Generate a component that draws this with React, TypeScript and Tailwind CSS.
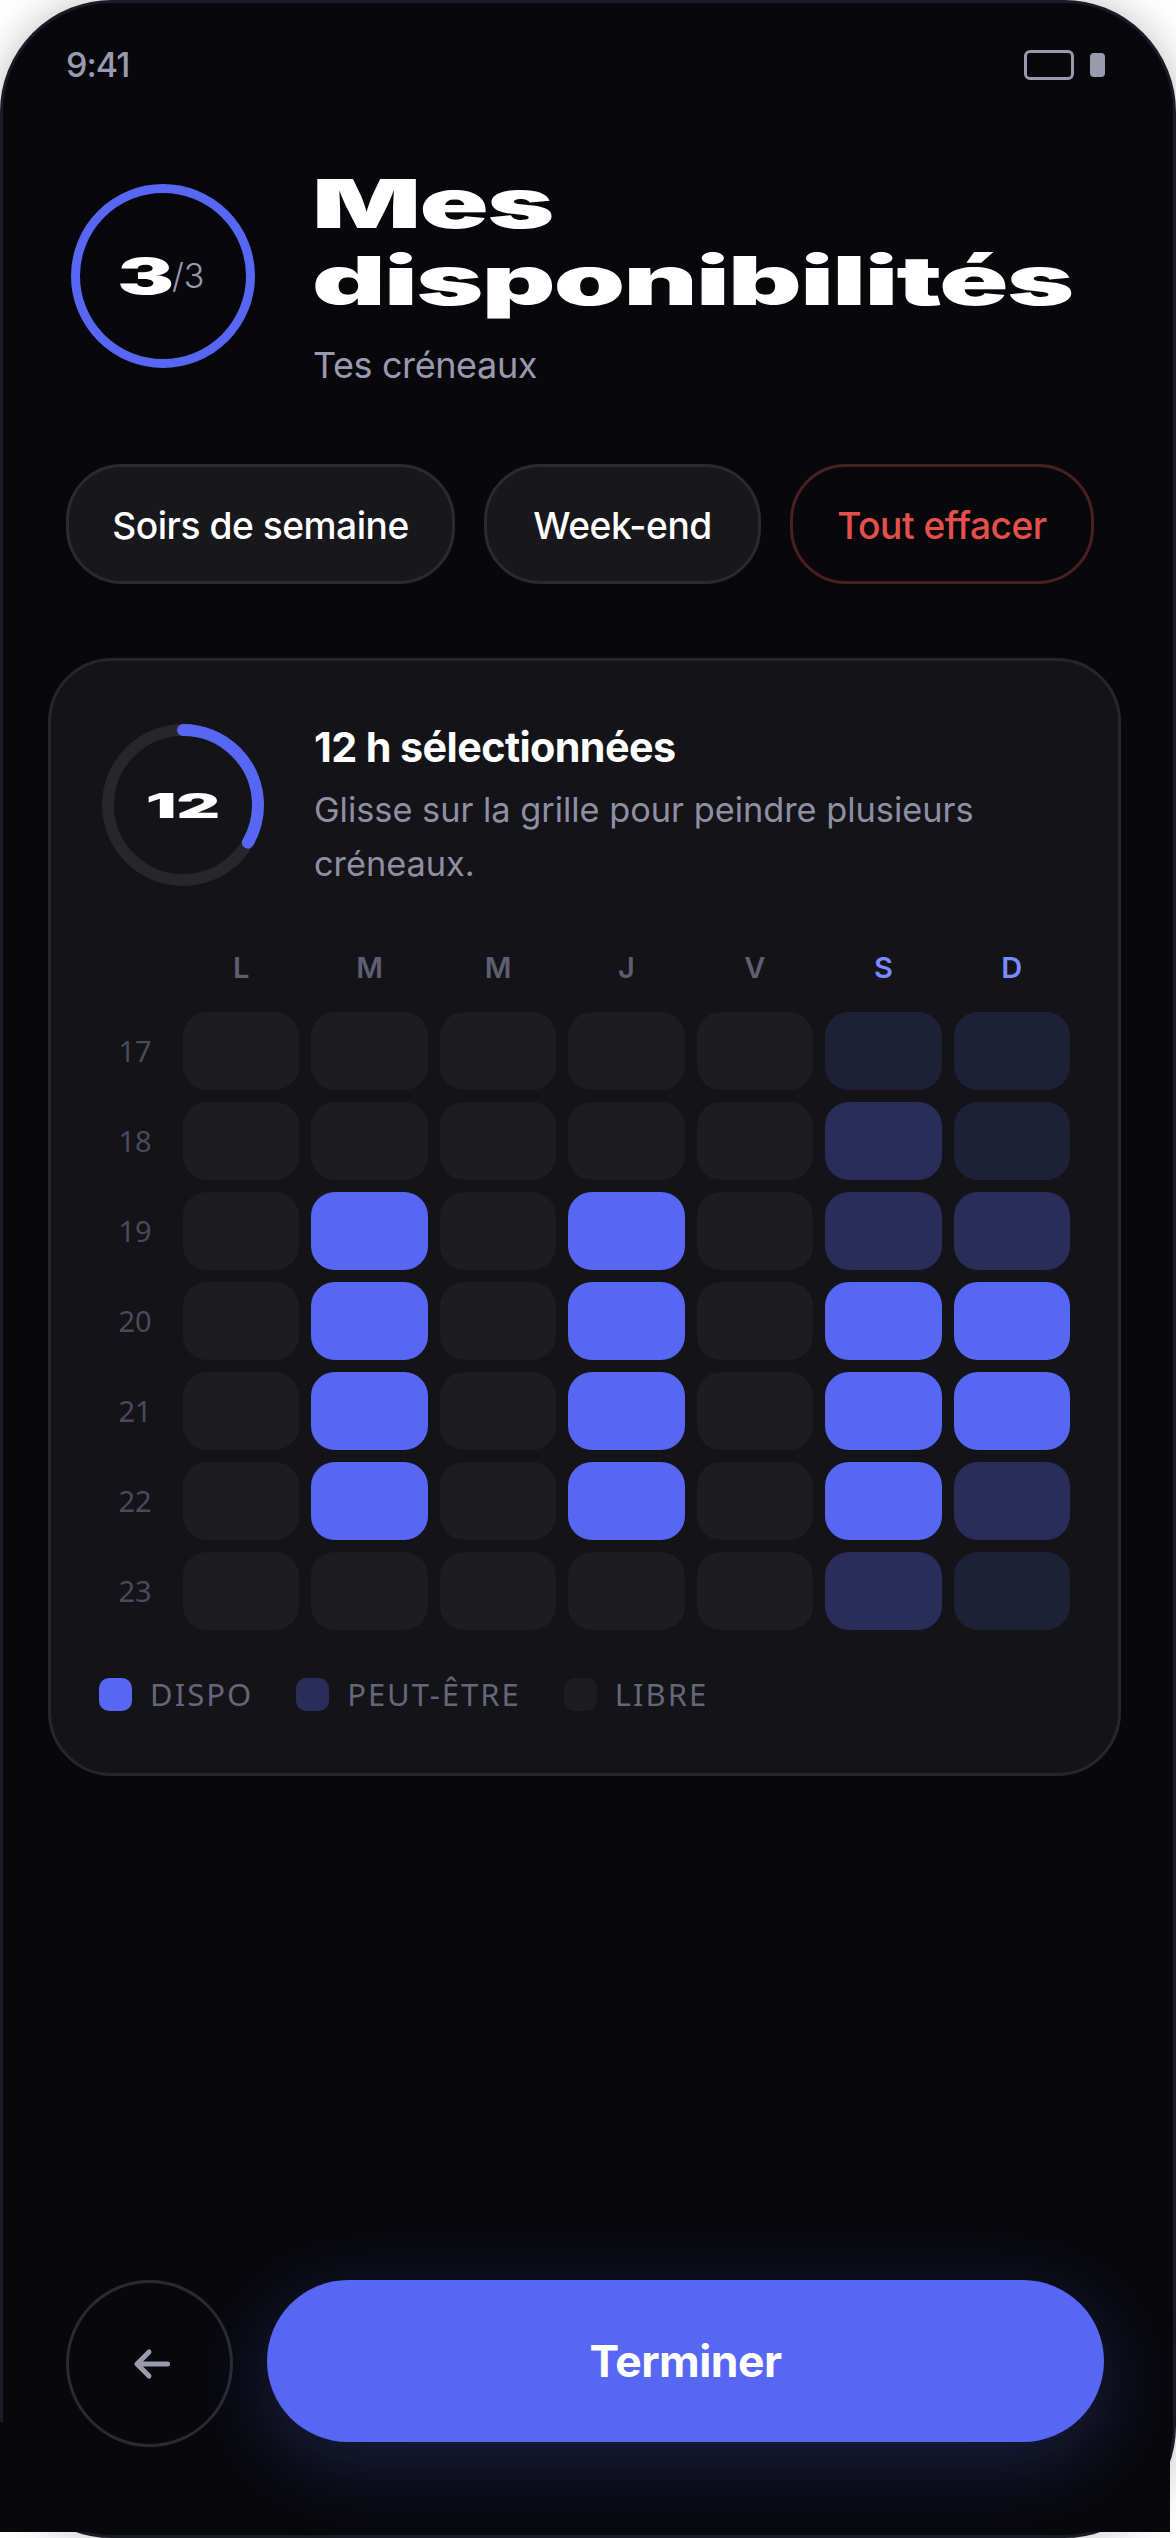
const days = ['L', 'M', 'M', 'J', 'V', 'S', 'D']

// . libre, f peut-être léger, m peut-être, B dispo
const rows = [
  { hour: 17, slots: '.....ff' },
  { hour: 18, slots: '.....mf' },
  { hour: 19, slots: '.B.B.mm' },
  { hour: 20, slots: '.B.B.BB' },
  { hour: 21, slots: '.B.B.BB' },
  { hour: 22, slots: '.B.B.Bm' },
  { hour: 23, slots: '.....mf' },
]

const slotColors: Record<string, string> = {
  '.': 'bg-[#1c1c21]',
  f: 'bg-[#1d2037]',
  m: 'bg-[#2a2c5a]',
  B: 'bg-[#5767f3]',
}

const legend = [
  { label: 'DISPO', color: 'bg-[#5767f3]' },
  { label: 'PEUT-ÊTRE', color: 'bg-[#2a2c5a]' },
  { label: 'LIBRE', color: 'bg-[#1c1c21]' },
]

export default function App() {
  return (
    <div className="relative h-[2538px] w-[1176px] overflow-hidden bg-white font-['Inter',sans-serif]">
      <div className="relative flex h-full w-full flex-col rounded-[112px] border-[3px] border-[#1b1b28] bg-[#08080c] shadow-[0_0_40px_rgba(0,0,0,0.25)]">
        {/* Bottom corners are squared off by the content layer */}
        <div className="absolute bottom-[3px] left-[-3px] h-[110px] w-[120px] bg-[#08080c]" />
        <div className="absolute bottom-[3px] right-[3px] h-[90px] w-[120px] bg-[#08080c]" />

        {/* Status bar */}
        <div className="relative flex items-center justify-between pl-[63px] pr-[68px] pt-[44px]">
          <span className="text-[34px] leading-[36px] font-medium tracking-[-1px] text-[#9a9aae]">9:41</span>
          <div className="flex items-center gap-[16px]">
            <div className="h-[30px] w-[50px] rounded-[6px] border-[3px] border-[#9a9aae]" />
            <div className="h-[24px] w-[15px] rounded-[4px] bg-[#9a9aae]" />
          </div>
        </div>

        {/* Header */}
        <div className="relative mt-[101px] flex pl-[68px]">
          <div className="flex h-[184px] w-[184px] shrink-0 items-center justify-center rounded-full border-[9px] border-[#5767f3] pl-[7px]">
            <span className="inline-block origin-center scale-x-[1.7] text-[50px] leading-none font-black text-white">3</span>
            <span className="ml-[10px] text-[34px] leading-none font-light text-[#9a9aae]">/3</span>
          </div>
          <div className="ml-[58px] min-w-0">
            <h1 className="mt-[-19px] ml-[-1px] origin-left scale-x-[1.68] text-[68px] leading-[77px] font-black tracking-[-1px] whitespace-nowrap text-white">
              Mes
              <br />
              disponibilités
            </h1>
            <p className="mt-[22px] text-[36px] leading-[48px] tracking-[-0.4px] text-[#9a9aae]">Tes créneaux</p>
          </div>
        </div>

        {/* Quick actions */}
        <div className="relative mt-[75px] flex gap-[29px] pl-[63px]">
          <button className="h-[120px] w-[389px] rounded-[56px] border-[3px] border-[#2a2a30] bg-[#17171c] pt-[4px] text-[37.2px] font-medium tracking-[-0.5px] text-white">
            Soirs de semaine
          </button>
          <button className="h-[120px] w-[277px] rounded-[56px] border-[3px] border-[#2a2a30] bg-[#17171c] pt-[4px] text-[37.2px] font-medium tracking-[-0.5px] text-white">
            Week-end
          </button>
          <button className="h-[120px] w-[304px] rounded-[56px] border-[3px] border-[#4a2020] bg-[#08080c] pt-[4px] text-[37.2px] font-medium tracking-[-0.5px] text-[#e5504c]">
            Tout effacer
          </button>
        </div>

        {/* Availability card */}
        <div className="relative mt-[74px] ml-[45px] h-[1118px] w-[1073px] rounded-[64px] border-[3px] border-[#26262b] bg-[#131318] px-[48px] pt-[63px]">
          <div className="flex">
            <div className="relative ml-[3px] h-[162px] w-[162px] shrink-0">
              <svg viewBox="0 0 162 162" className="h-full w-full -rotate-90">
                <circle cx="81" cy="81" r="75" fill="none" stroke="#26262b" strokeWidth="12" />
                <circle
                  cx="81"
                  cy="81"
                  r="75"
                  fill="none"
                  stroke="#5767f3"
                  strokeWidth="12"
                  strokeLinecap="round"
                  strokeDasharray="157 471"
                />
              </svg>
              <span className="absolute inset-0 flex scale-x-[2] items-center justify-center text-[34px] font-black text-white">12</span>
            </div>
            <div className="ml-[50px] min-w-0">
              <div className="mt-[-1px] text-[41.3px] leading-[48px] font-bold tracking-[-0.6px] text-white">12 h sélectionnées</div>
              <p className="mt-[12px] text-[34.3px] leading-[54px] text-[#8f8fa3]">
                Glisse sur la grille pour peindre plusieurs créneaux.
              </p>
            </div>
          </div>

          {/* Week grid */}
          <div className="mt-[60px] grid grid-cols-[72px_repeat(7,1fr)] gap-[12px]">
            <div />
            {days.map((day, i) => (
              <div
                key={i}
                className={`mb-[15px] text-center text-[29px] leading-[34px] font-semibold ${i > 4 ? 'text-[#7b8aff]' : 'text-[#5e5e72]'}`}
              >
                {day}
              </div>
            ))}
            {rows.map((row) => (
              <div key={row.hour} className="contents">
                <div className="flex h-[78px] items-center justify-center font-['Noto_Sans',sans-serif] text-[29px] text-[#4a4a5c]">
                  {row.hour}
                </div>
                {row.slots.split('').map((slot, i) => (
                  <div key={i} className={`h-[78px] rounded-[24px] ${slotColors[slot]}`} />
                ))}
              </div>
            ))}
          </div>

          {/* Legend */}
          <div className="mt-[48px] flex gap-[43px] font-['Noto_Sans',sans-serif] text-[31px] leading-[33px] tracking-[2px] text-[#66667a]">
            {legend.map((item) => (
              <div key={item.label} className="flex items-center gap-[18px]">
                <div className={`h-[33px] w-[33px] rounded-[10px] ${item.color}`} />
                <span>{item.label}</span>
              </div>
            ))}
          </div>
        </div>

        {/* Footer */}
        <div className="relative mt-auto mb-[88px] flex items-start gap-[34px] pl-[63px]">
          <button className="flex h-[167px] w-[167px] items-center justify-center rounded-full border-[3px] border-[#2a2a30]">
            <svg viewBox="0 0 40 34" className="ml-[5px] h-[34px] w-[40px]" fill="none" stroke="#9a9aae" strokeWidth="5" strokeLinecap="round" strokeLinejoin="round">
              <path d="M35.5 17H5M17 5L5 17l12 12" />
            </svg>
          </button>
          <button className="h-[162px] w-[837px] rounded-full bg-[#5767f3] text-[44.5px] font-bold tracking-[-0.5px] text-white shadow-[0_20px_80px_rgba(87,103,243,0.25)]">
            Terminer
          </button>
        </div>
      </div>
    </div>
  )
}
